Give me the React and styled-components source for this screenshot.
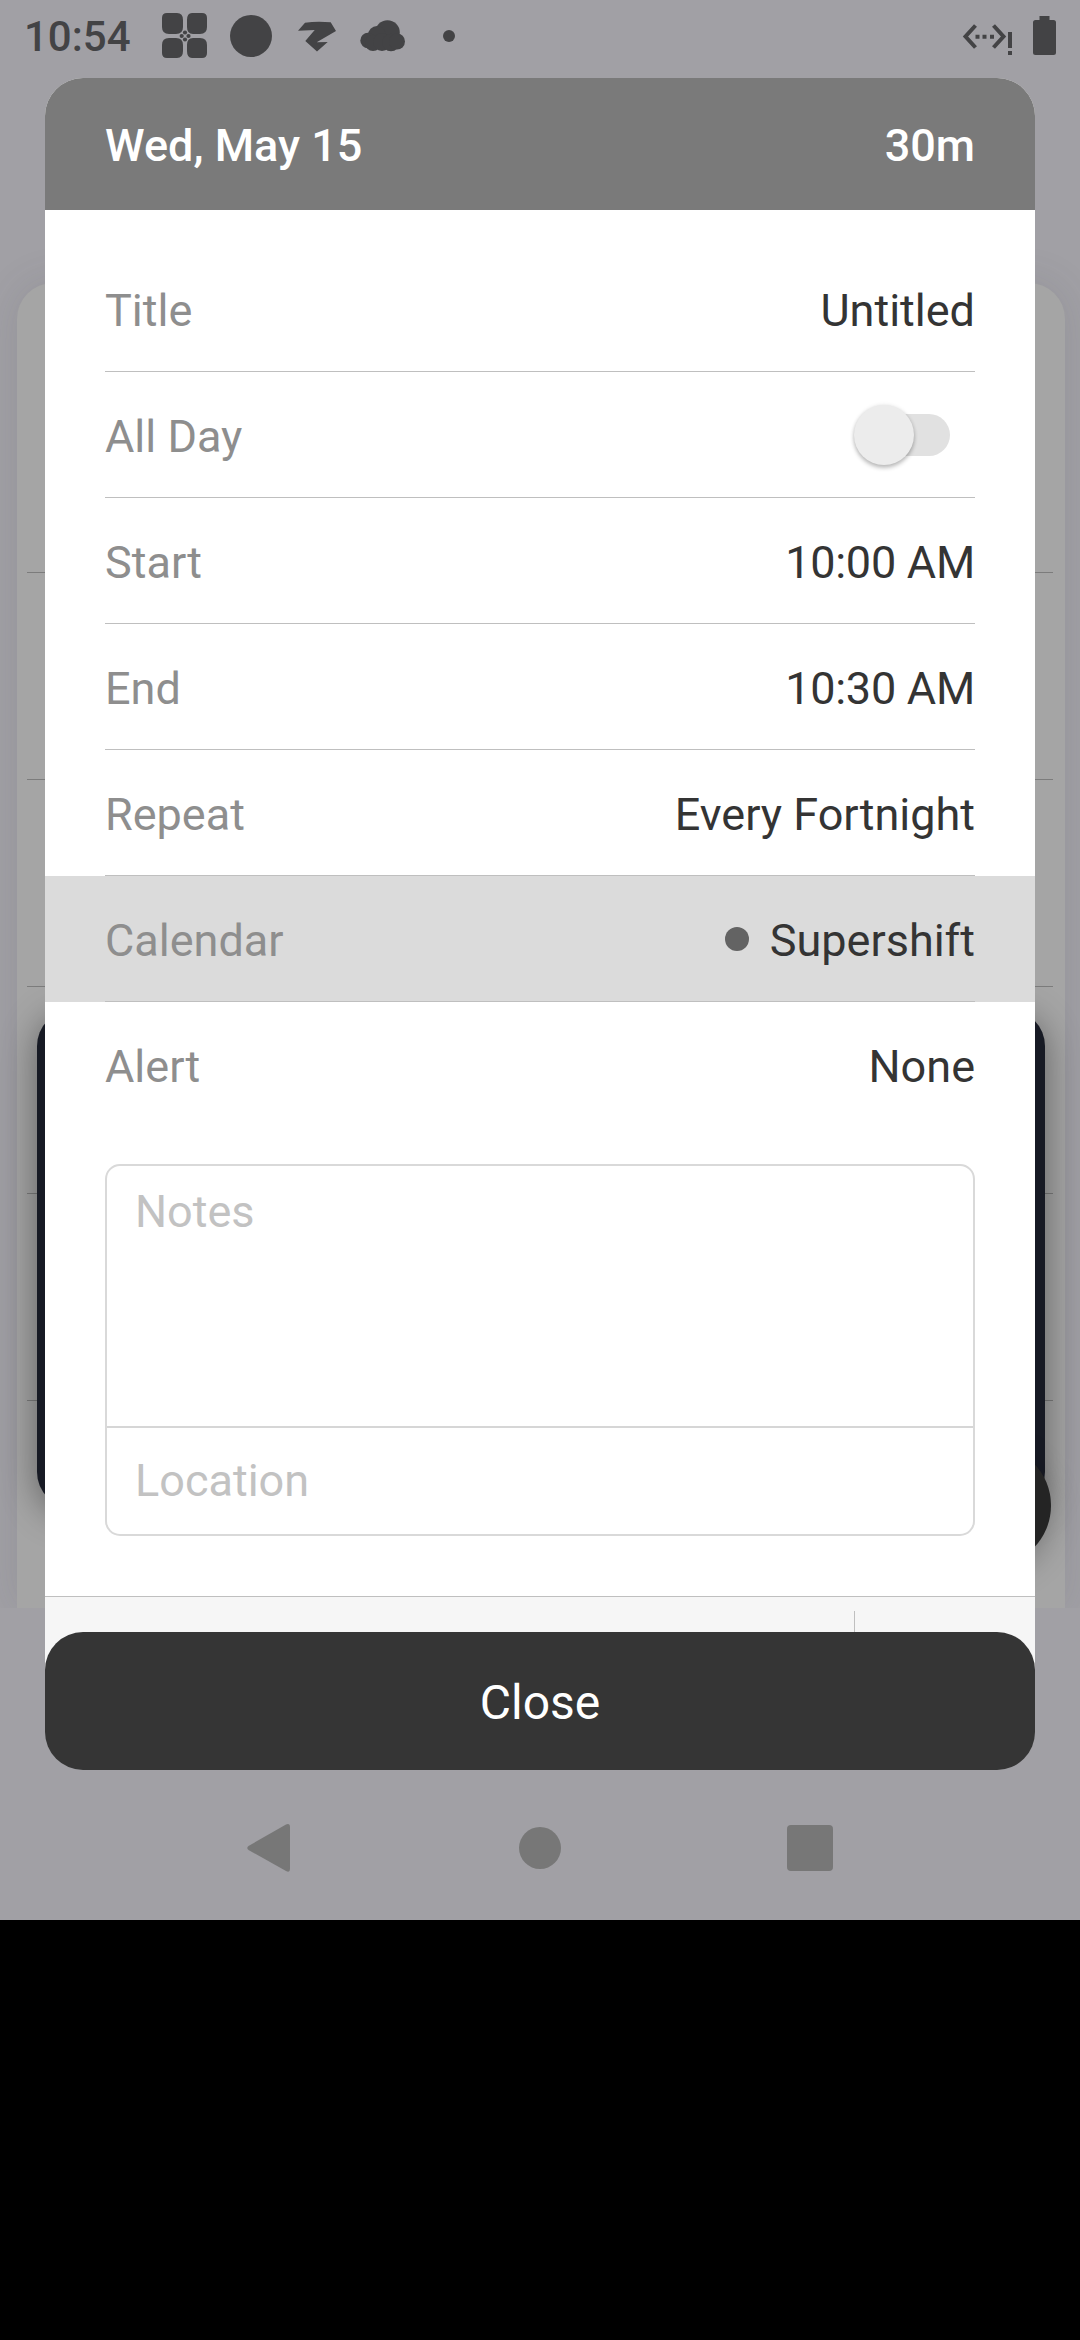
import React from "react";
import styled, { createGlobalStyle } from "styled-components";

const GlobalStyle = createGlobalStyle`
  *, *::before, *::after { box-sizing: border-box; }
  body { margin: 0; background: #000; }
`;

const Page = styled.div`
  width: 1080px;
  height: 2340px;
  background: #000;
  overflow: hidden;
  font-family: Roboto, "Noto Sans", sans-serif;
`;

const Screen = styled.div`
  display: grid;
  grid-template: 1920px / 1080px;
  overflow: hidden;
  background: #a1a0a5;
  & > * { grid-area: 1 / 1; }
`;

const Background = styled.div`
  display: flex;
  flex-direction: column;
  height: 1608px;
  padding: 283px 15px 0 17px;
  overflow: hidden;
  position: relative;
`;

const CalendarCard = styled.div`
  flex: 1;
  padding: 83px 12px 0 10px;
  border-radius: 36px 36px 0 0;
  background: #a5a5a5;
  box-shadow: 0 0 40px rgba(70, 70, 85, 0.14);
`;

const Week = styled.div`
  height: 207px;
  border-bottom: 1px solid #7c7c7c;
`;

const DarkPanel = styled.div`
  position: absolute;
  left: 37px;
  top: 1010px;
  width: 1008px;
  height: 498px;
  border-radius: 36px;
  background: #171a24;
  box-shadow: 0 6px 36px rgba(0, 0, 0, 0.42);
`;

const Fab = styled.div`
  position: absolute;
  left: 930px;
  top: 1445px;
  width: 121px;
  height: 121px;
  border-radius: 50%;
  background: #242424;
  box-shadow: 0 8px 30px rgba(0, 0, 0, 0.25);
`;

const Foreground = styled.div`
  display: flex;
  flex-direction: column;
  position: relative;
`;

const StatusBar = styled.div`
  display: flex;
  justify-content: space-between;
  height: 78px;
  padding: 0 24px;
  color: #434345;
`;

const StatusGroup = styled.div`
  display: flex;
  align-items: flex-start;
`;

const Clock = styled.div`
  width: 131px;
  padding-top: 12px;
  font-size: 42px;
  line-height: 50px;
  font-weight: 500;
`;

const Glyph = styled.svg`
  display: block;
  flex: none;
  fill: currentColor;
`;

const Dialog = styled.div`
  display: flex;
  flex-direction: column;
  margin: 0 45px;
`;

const Sheet = styled.div`
  display: flex;
  flex-direction: column;
  height: 1592px;
  overflow: hidden;
  border-radius: 38px 38px 0 0;
  background: #fff;
`;

const SheetHeader = styled.div`
  display: flex;
  justify-content: space-between;
  height: 132px;
  padding: 2px 60px 0;
  background: #7a7a7a;
  color: #fff;
  font-size: 45px;
  line-height: 132px;
  font-weight: 500;
`;

const Rows = styled.div`
  padding-top: 36px;
`;

const Row = styled.div`
  padding: 0 60px;
  background: ${(p) => (p.$active ? "#dbdbdb" : "#fff")};
`;

const RowInner = styled.div`
  display: flex;
  justify-content: space-between;
  align-items: center;
  height: 126px;
  border-bottom: 1px solid ${(p) => (p.$last ? "transparent" : "#bfbfbf")};
  font-size: 45px;
  line-height: 52px;
`;

const Label = styled.span`
  padding-top: 4px;
  color: #8e8e8e;
`;

const Value = styled.span`
  padding-top: 4px;
  color: #343434;
  letter-spacing: ${(p) => (p.$time ? "-0.25px" : "normal")};
`;

const CalendarValue = styled.span`
  display: flex;
  align-items: center;
  gap: 21px;
`;

const Dot = styled.span`
  width: 24px;
  height: 24px;
  border-radius: 50%;
  background: #636363;
`;

const Toggle = styled.span`
  display: flex;
  align-items: center;
  width: 90px;
  height: 42px;
  margin: 0 25px 0 0;
  border-radius: 21px;
  background: #e1e1e1;
`;

const Thumb = styled.span`
  flex: none;
  width: 60px;
  height: 60px;
  margin-left: -6px;
  border-radius: 50%;
  background: #ececec;
  box-shadow: 0 3px 4px rgba(0, 0, 0, 0.24), 0 0 4px rgba(0, 0, 0, 0.1);
`;

const Fields = styled.div`
  display: flex;
  flex-direction: column;
  height: 372px;
  margin: 36px 60px 60px;
  border: 2px solid #d9d9d9;
  border-radius: 15px;
  color: #c2c2c2;
  font-size: 45px;
  line-height: 52px;
`;

const Notes = styled.div`
  height: 262px;
  padding: 20px 28px;
  border-bottom: 2px solid #d6d6d6;
`;

const Location = styled.div`
  padding: 27px 28px;
`;

const Footer = styled.div`
  display: flex;
  flex: 1;
  justify-content: flex-end;
  padding-top: 14px;
  border-top: 1px solid #bfbfbf;
  background: #f6f6f6;
`;

const FooterAction = styled.div`
  width: 181px;
  border-left: 1px solid #bfbfbf;
`;

const CloseButton = styled.button`
  display: block;
  height: 138px;
  margin: -38px 0 0;
  padding: 3px 0 0;
  border: 0;
  border-radius: 38px;
  background: #353535;
  color: #fff;
  font: 400 48px/56px Roboto, "Noto Sans", sans-serif;
  position: relative;
`;

const NavBar = styled.div`
  display: grid;
  grid-template-columns: 272px 272px 268px;
  place-items: center;
  height: 150px;
  padding: 6px 0 0 132px;
  color: #777;
`;

const fields = [
  { label: "Title", value: "Untitled" },
  { label: "All Day", toggle: true },
  { label: "Start", value: "10:00 AM", time: true },
  { label: "End", value: "10:30 AM", time: true },
  { label: "Repeat", value: "Every Fortnight" },
  { label: "Calendar", value: "Supershift", dot: true },
  { label: "Alert", value: "None" },
];

function FieldRow({ field, last }) {
  return (
    <Row $active={field.dot}>
      <RowInner $last={last}>
        <Label>{field.label}</Label>
        {field.toggle ? (
          <Toggle><Thumb /></Toggle>
        ) : field.dot ? (
          <CalendarValue><Dot /><Value>{field.value}</Value></CalendarValue>
        ) : (
          <Value $time={field.time}>{field.value}</Value>
        )}
      </RowInner>
    </Row>
  );
}

export default function App() {
  return (
    <Page>
      <GlobalStyle />
      <Screen>
        <Background>
          <CalendarCard>
            {[0, 1, 2, 3, 4].map((week) => <Week key={week} />)}
          </CalendarCard>
          <DarkPanel />
          <Fab />
        </Background>
        <Foreground>
          <StatusBar>
            <StatusGroup>
              <Clock>10:54</Clock>
              <Glyph width="320" height="78" viewBox="155 0 320 78">
                <path d="M167 13h10q6 0 6 7v7q0 7-7 7h-7q-7 0-7-7v-9q0-5 5-5zM192 13h10q5 0 5 5v9q0 7-7 7h-7q-6 0-6-7v-7q0-7 5-7zM167 58h10q6 0 6-7v-6q0-7-7-7h-7q-7 0-7 7v8q0 5 5 5zM192 58h10q5 0 5-5v-8q0-7-7-7h-7q-6 0-6 7v6q0 7 5 7z" />
                <circle cx="185" cy="32.500" r="2.100" />
                <circle cx="181.700" cy="36" r="2.100" />
                <circle cx="188.500" cy="36" r="2.100" />
                <circle cx="185" cy="39.500" r="2.100" />
                <circle cx="251" cy="36" r="21" />
                <path d="M298 30.700L305 22.700Q317 21 330.700 22.300L336 31 316.700 42.300 327.700 42 317 51.500 305.300 41 314.700 30z" />
                <circle cx="387.500" cy="32.500" r="12.300" />
                <circle cx="377" cy="35" r="9" />
                <circle cx="368" cy="40.500" r="7.700" />
                <circle cx="373" cy="43" r="8" />
                <circle cx="382" cy="42" r="9" />
                <circle cx="391" cy="42.500" r="8.700" />
                <circle cx="397" cy="41.500" r="8" />
                <circle cx="449" cy="36" r="6" />
              </Glyph>
            </StatusGroup>
            <StatusGroup>
              <Glyph width="96" height="78" viewBox="960 0 96 78">
                <path fill="none" stroke="currentColor" strokeWidth="4" d="M975.500 25.500L965.500 36.500l10 11M993.500 25.500l10 11-10 11" />
                <path d="M975.500 34.700h4v4h-4zM982.500 34.700h4v4h-4zM990 34.700h4v4h-4zM1008 32h4v16h-4zM1008 51h4v4h-4z" />
                <path d="M1039.500 16h10v4h4q2.500 0 2.500 2.500v30q0 2.500-2.500 2.500h-18q-2.500 0-2.500-2.500v-30q0-2.500 2.500-2.500h4z" />
              </Glyph>
            </StatusGroup>
          </StatusBar>
          <Dialog>
            <Sheet>
              <SheetHeader>
                <span>Wed, May 15</span>
                <span>30m</span>
              </SheetHeader>
              <Rows>
                {fields.map((field, i) => (
                  <FieldRow key={field.label} field={field} last={i === fields.length - 1} />
                ))}
              </Rows>
              <Fields>
                <Notes>Notes</Notes>
                <Location>Location</Location>
              </Fields>
              <Footer><FooterAction /></Footer>
            </Sheet>
            <CloseButton>Close</CloseButton>
          </Dialog>
          <NavBar>
            <Glyph width="43" height="50" viewBox="0 0 43 50">
              <path d="M39 1.500Q43 0 43 4V46Q43 50 39 48L1.500 27Q-1 25 1.500 23Z" />
            </Glyph>
            <Glyph width="42" height="42" viewBox="0 0 42 42"><circle cx="21" cy="21" r="21" /></Glyph>
            <Glyph width="46" height="46" viewBox="0 0 46 46"><rect width="46" height="46" rx="4" /></Glyph>
          </NavBar>
        </Foreground>
      </Screen>
    </Page>
  );
}
